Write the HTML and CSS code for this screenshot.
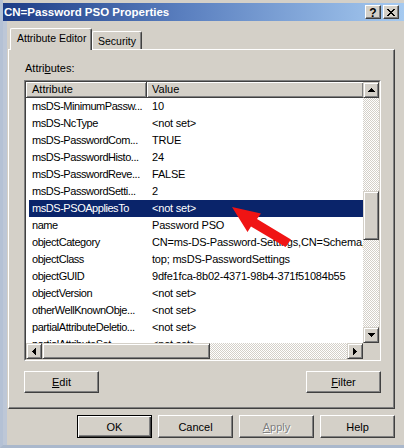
FILE: index.html
```html
<!DOCTYPE html>
<html>
<head>
<meta charset="utf-8">
<title>CN=Password PSO Properties</title>
<link rel="stylesheet" href="styles.css">
</head>
<body>
<div class="window">
  <div class="titlebar">
    <span class="title">CN=Password PSO Properties</span>
    <div class="caption-btns">
      <span class="cbtn q">?</span>
      <span class="cbtn"><svg width="8" height="7" viewBox="0 0 8 7"><path d="M0 0h2v1h1v1h2V1h1V0h2v1H7v1H6v1H5v1h1v1h1v1h1v1H6V6H5V5H3v1H2v1H0V6h1V5h1V4h1V3H2V2H1V1H0z" fill="#000"/></svg></span>
    </div>
  </div>
  <div class="client">
    <div class="tabs">
      <div class="tab active">Attribute Editor</div>
      <div class="tab other">Security</div>
    </div>
    <div class="panel">
      <div class="label">Attri<u>b</u>utes:</div>
      <div class="listbox">
        <div class="list-inner">
          <div class="list-main">
            <div class="list-view">
              <div class="header">
                <div class="hcell c1">Attribute</div>
                <div class="hcell c2">Value</div>
              </div>
              <div class="row"><div class="cell c1">msDS-MinimumPassw...</div><div class="cell c2">10</div></div>
              <div class="row"><div class="cell c1">msDS-NcType</div><div class="cell c2">&lt;not set&gt;</div></div>
              <div class="row"><div class="cell c1">msDS-PasswordCom...</div><div class="cell c2">TRUE</div></div>
              <div class="row"><div class="cell c1">msDS-PasswordHisto...</div><div class="cell c2">24</div></div>
              <div class="row"><div class="cell c1">msDS-PasswordReve...</div><div class="cell c2">FALSE</div></div>
              <div class="row"><div class="cell c1">msDS-PasswordSetti...</div><div class="cell c2">2</div></div>
              <div class="row sel"><div class="cell c1">msDS-PSOAppliesTo</div><div class="cell c2">&lt;not set&gt;</div></div>
              <div class="row"><div class="cell c1">name</div><div class="cell c2">Password PSO</div></div>
              <div class="row"><div class="cell c1">objectCategory</div><div class="cell c2">CN=ms-DS-Password-Settings,CN=Schema,CN=Configuration</div></div>
              <div class="row"><div class="cell c1">objectClass</div><div class="cell c2">top; msDS-PasswordSettings</div></div>
              <div class="row"><div class="cell c1">objectGUID</div><div class="cell c2">9dfe1fca-8b02-4371-98b4-371f51084b55</div></div>
              <div class="row"><div class="cell c1">objectVersion</div><div class="cell c2">&lt;not set&gt;</div></div>
              <div class="row"><div class="cell c1">otherWellKnownObje...</div><div class="cell c2">&lt;not set&gt;</div></div>
              <div class="row"><div class="cell c1">partialAttributeDeletio...</div><div class="cell c2">&lt;not set&gt;</div></div>
              <div class="row"><div class="cell c1">partialAttributeSet</div><div class="cell c2">&lt;not set&gt;</div></div>
            </div>
            <div class="vscroll">
              <div class="sbtn"><svg width="7" height="4" viewBox="0 0 7 4"><path d="M3 0h1v1h1v1h1v1h1v1H0V3h1V2h1V1h1z" fill="#000"/></svg></div>
              <div class="track vtrack1"></div>
              <div class="thumb vthumb"></div>
              <div class="track grow"></div>
              <div class="sbtn"><svg width="7" height="4" viewBox="0 0 7 4"><path d="M0 0h7v1H6v1H5v1H4v1H3V3H2V2H1V1H0z" fill="#000"/></svg></div>
            </div>
          </div>
          <div class="hrow">
            <div class="hscroll">
              <div class="sbtn"><svg width="4" height="7" viewBox="0 0 4 7"><path d="M3 0h1v7H3V6H2V5H1V4H0V3h1V2h1V1h1z" fill="#000"/></svg></div>
              <div class="thumb hthumb"></div>
              <div class="track grow"></div>
              <div class="sbtn"><svg width="4" height="7" viewBox="0 0 4 7"><path d="M0 0h1v1h1v1h1v1h1v1H3v1H2v1H1v1H0z" fill="#000"/></svg></div>
            </div>
            <div class="corner"></div>
          </div>
        </div>
      </div>
      <div class="panel-btns">
        <button class="btn"><span><u>E</u>dit</span></button>
        <button class="btn"><span><u>F</u>ilter</span></button>
      </div>
    </div>
    <div class="dlg-btns">
      <button class="btn big default">OK</button>
      <button class="btn big">Cancel</button>
      <button class="btn big disabled"><span><u>A</u>pply</span></button>
      <button class="btn big">Help</button>
    </div>
  </div>
</div>
<svg class="arrow" width="404" height="448" viewBox="0 0 404 448">
  <polygon points="232,207 261,213.5 257,219 291,239.5 285.5,247 251,226.5 247.5,232" fill="#f01414"/>
</svg>
</body>
</html>
```
FILE: styles.css
```css
* { box-sizing: border-box; }
html, body { margin: 0; padding: 0; }
body {
  width: 404px;
  height: 448px;
  overflow: hidden;
  position: relative;
  background: #d4d0c8;
  font-family: "Liberation Sans", Arial, sans-serif;
  font-size: 11px;
  color: #000;
}
.window {
  width: 404px;
  height: 448px;
  display: flex;
  flex-direction: column;
  padding-top: 3px;
  border-left: 3px solid #b4c1d5;
  border-bottom: 3px solid #aab8cc;
  background: #d4d0c8;
}
.titlebar {
  height: 18px;
  flex: none;
  display: flex;
  align-items: center;
  padding-left: 1px;
  background: linear-gradient(90deg, #1d3c86 0%, #5a7fbf 45%, #a6caf0 100%);
  color: #fff;
}
.title {
  font-weight: bold;
  font-size: 11.5px;
  line-height: 18px;
  white-space: nowrap;
}
.caption-btns {
  margin-left: auto;
  margin-right: 5px;
  display: flex;
  gap: 2px;
}
.cbtn {
  width: 16px;
  height: 14px;
  background: #d4d0c8;
  border: 1px solid;
  border-color: #fff #404040 #404040 #fff;
  box-shadow: inset -1px -1px #808080;
  display: flex;
  align-items: center;
  justify-content: center;
  color: #000;
}
.cbtn.q {
  font-weight: bold;
  font-size: 12px;
  line-height: 12px;
  padding-top: 1px;
}
.client {
  flex: 1;
  display: flex;
  flex-direction: column;
  padding: 7px 9px 0 5px;
  background: linear-gradient(90deg, #bdc7d7 4px, #d4d0c8 4px);
}
.tabs {
  display: flex;
  align-items: flex-end;
  height: 22px;
  margin-left: 2px;
  margin-bottom: -1px;
  position: relative;
  z-index: 1;
}
.tab {
  background: #d4d0c8;
  border-top: 1px solid #fff;
  border-left: 1px solid #fff;
  border-right: 1px solid #404040;
  box-shadow: inset -1px 0 #808080;
  border-radius: 2px 2px 0 0;
  white-space: nowrap;
  line-height: 13px;
  padding-left: 6px;
}
.tab.active {
  width: 82px;
  height: 22px;
  padding-top: 3px;
  padding-left: 6px;
  font-size: 10.5px;
}
.tab.other {
  width: 50px;
  height: 18px;
  margin-bottom: 1px;
  padding-top: 3px;
  padding-left: 5px;
  font-size: 10.5px;
}
.panel {
  height: 360px;
  flex: none;
  border: 1px solid;
  border-color: #fff #404040 #404040 #fff;
  box-shadow: inset -1px -1px #808080;
  padding: 12px 13px 0 15px;
  display: flex;
  flex-direction: column;
}
.label {
  height: 13px;
  line-height: 13px;
  margin-bottom: 5px;
  padding-left: 1px;
}
.listbox {
  width: 357px;
  height: 281px;
  border: 1px solid;
  border-color: #808080 #fff #fff #808080;
}
.list-inner {
  width: 100%;
  height: 100%;
  border: 1px solid;
  border-color: #404040 #d4d0c8 #d4d0c8 #404040;
  background: #fff;
  display: flex;
  flex-direction: column;
}
.list-main {
  display: flex;
  height: 261px;
  flex: none;
}
.list-view {
  flex: 1;
  overflow: hidden;
  background: #fff;
}
.header {
  display: flex;
  height: 16px;
}
.hcell {
  height: 16px;
  line-height: 14px;
  background: #d4d0c8;
  border-right: 1px solid #404040;
  border-bottom: 1px solid #404040;
  box-shadow: inset 1px 1px #fff, inset -1px -1px #808080;
  white-space: nowrap;
  overflow: hidden;
}
.hcell.c1 { width: 121px; padding-left: 6px; }
.hcell.c2 { flex: 1; padding-left: 5px; border-right: none; }
.row {
  display: flex;
  height: 17px;
  line-height: 17px;
  white-space: nowrap;
}
.cell.c1 {
  width: 121px;
  flex: none;
  padding-left: 6px;
  overflow: hidden;
  letter-spacing: -0.45px;
}
.cell.c2 {
  padding-left: 5px;
  letter-spacing: -0.2px;
}
.row.sel {
  color: #fff;
  background: linear-gradient(90deg, #fff 3px, #0a246a 3px);
}
.vscroll {
  width: 16px;
  flex: none;
  display: flex;
  flex-direction: column;
}
.sbtn {
  width: 16px;
  height: 16px;
  flex: none;
  background: #d4d0c8;
  border: 1px solid;
  border-color: #d4d0c8 #404040 #404040 #d4d0c8;
  box-shadow: inset 1px 1px #fff, inset -1px -1px #808080;
  display: flex;
  align-items: center;
  justify-content: center;
}
.track {
  background-color: #fff;
  background-image: conic-gradient(#d4d0c8 25%, #fff 0 50%, #d4d0c8 0 75%, #fff 0);
  background-size: 2px 2px;
}
.track.grow { flex: 1; }
.vtrack1 { height: 93px; flex: none; }
.thumb {
  background: #d4d0c8;
  border: 1px solid;
  border-color: #d4d0c8 #404040 #404040 #d4d0c8;
  box-shadow: inset 1px 1px #fff, inset -1px -1px #808080;
  flex: none;
}
.vthumb { height: 49px; }
.hrow {
  display: flex;
  height: 16px;
  flex: none;
}
.hscroll {
  flex: 1;
  display: flex;
}
.hthumb { width: 168px; }
.corner {
  width: 16px;
  background: #d4d0c8;
}
.panel-btns {
  margin-top: 10px;
  display: flex;
  justify-content: space-between;
}
.btn {
  width: 75px;
  height: 22px;
  padding: 0;
  margin: 0;
  background: #d4d0c8;
  border: 1px solid;
  border-color: #fff #404040 #404040 #fff;
  box-shadow: inset -1px -1px #808080;
  font-family: "Liberation Sans", Arial, sans-serif;
  font-size: 11px;
  color: #000;
  display: flex;
  align-items: center;
  justify-content: center;
}
.btn.big { height: 23px; }
.btn.default {
  border: 1px solid #000;
  box-shadow: inset 1px 1px #fff, inset -1px -1px #404040, inset -2px -2px #808080;
}
.btn.disabled {
  color: #808080;
  text-shadow: 1px 1px #fff;
}
.dlg-btns {
  margin-top: 6px;
  display: flex;
  justify-content: flex-end;
  gap: 6px;
}
.arrow {
  position: absolute;
  left: 0;
  top: 0;
  pointer-events: none;
}
```
